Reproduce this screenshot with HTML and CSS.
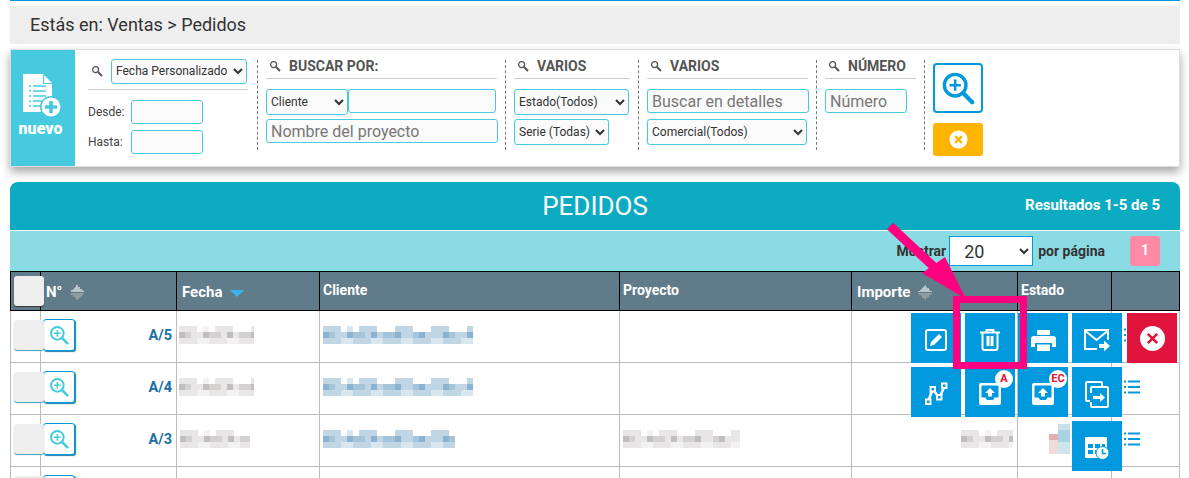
FILE: index.html
```html
<!DOCTYPE html>
<html lang="es">
<head>
<meta charset="utf-8">
<title>Pedidos</title>
<link rel="stylesheet" href="styles.css">
</head>
<body>
<svg class="defs" width="0" height="0">
  <defs>
    <symbol id="lens" viewBox="0 0 12 12"><circle cx="4.600" cy="4.600" r="3" fill="none" stroke="currentColor" stroke-width="1.300"/><path d="M7 7l4 4" stroke="currentColor" stroke-width="2"/></symbol>
    <symbol id="zoomplus" viewBox="0 0 24 24"><circle cx="10" cy="10" r="7.600" fill="none" stroke="currentColor" stroke-width="2.400"/><path d="M15.600 15.600L22 22" stroke="currentColor" stroke-width="3" stroke-linecap="round"/><path d="M10 6v8M6 10h8" stroke="currentColor" stroke-width="1.800"/></symbol>
    <symbol id="list" viewBox="0 0 16 14"><path d="M4 1.500h12M4 7h12M4 12.500h12" stroke="currentColor" stroke-width="2"/><path d="M0 1.500h2M0 7h2M0 12.500h2" stroke="currentColor" stroke-width="2"/></symbol>
    <symbol id="tray" viewBox="0 0 24 24"><rect x="1" y="1" width="22" height="22" rx="2" fill="#fff"/><path d="M3.500 3.500h17v12h-4l-1.500 2.500h-6l-1.500-2.500h-4z" fill="#0099dd"/><path d="M12 6l5 5h-3v3.500h-4V11H7z" fill="#fff"/></symbol>
  </defs>
</svg>
<div class="page">
  <div class="crumb">Estás en: Ventas &gt; Pedidos</div>

  <section class="filters">
    <div class="new">
      <svg class="new-icon" viewBox="0 0 40 44" width="40" height="44">
        <path d="M0 0h20l9 9v29H0z" fill="#fff"/>
        <path d="M20.500 1v8.500H29" fill="none" stroke="#46cadf" stroke-width="1.200"/>
        <path d="M10 12h13M10 17h13M10 22h13M10 27h13M10 32h8M6 12h2M6 17h2M6 22h2M6 27h2M6 32h2" stroke="#46cadf" stroke-width="1.500"/>
        <circle cx="28" cy="33" r="11" fill="#46cadf"/>
        <circle cx="28" cy="33" r="9.500" fill="#fff"/>
        <path d="M28 27v12M22 33h12" stroke="#46cadf" stroke-width="3.600"/>
      </svg>
      <span>nuevo</span>
    </div>
    <div class="groups">
      <div class="group group-date">
        <div class="date-head">
          <svg class="lens"><use href="#lens"/></svg>
          <select class="sel sel-date"><option>Fecha Personalizado</option></select>
        </div>
        <label class="date-row"><span class="date-label">Desde:</span><input class="inp inp-date" type="text"></label>
        <label class="date-row"><span class="date-label">Hasta:</span><input class="inp inp-date" type="text"></label>
      </div>
      <div class="group group-search">
        <div class="g-title"><svg class="lens"><use href="#lens"/></svg>BUSCAR POR:</div>
        <div class="line-pair">
          <select class="sel sel-client"><option>Cliente</option></select>
          <input class="inp inp-client" type="text">
        </div>
        <input class="inp inp-project" type="text" placeholder="Nombre del proyecto">
      </div>
      <div class="group group-var1">
        <div class="g-title"><svg class="lens"><use href="#lens"/></svg>VARIOS</div>
        <select class="sel sel-state"><option>Estado(Todos)</option></select>
        <select class="sel sel-serie"><option>Serie (Todas)</option></select>
      </div>
      <div class="group group-var2">
        <div class="g-title"><svg class="lens"><use href="#lens"/></svg>VARIOS</div>
        <input class="inp inp-detail" type="text" placeholder="Buscar en detalles">
        <select class="sel sel-sales"><option>Comercial(Todos)</option></select>
      </div>
      <div class="group group-num">
        <div class="g-title"><svg class="lens"><use href="#lens"/></svg>NÚMERO</div>
        <input class="inp inp-num" type="text" placeholder="Número">
      </div>
      <div class="group group-btns">
        <button class="btn-search" type="button"><svg width="34" height="34"><use href="#zoomplus"/></svg></button>
        <button class="btn-clear" type="button">
          <svg viewBox="0 0 20 20" width="19" height="19"><circle cx="10" cy="10" r="9.500" fill="#fff"/><path d="M6.500 6.500l7 7M13.500 6.500l-7 7" stroke="#ffb400" stroke-width="2.400"/></svg>
        </button>
      </div>
    </div>
  </section>

  <section class="results">
    <header class="res-head">
      <h1>PEDIDOS</h1>
      <span class="res-count">Resultados 1-5 de 5</span>
    </header>
    <div class="res-bar">
      <span>Mostrar</span>
      <select class="per-page"><option>20</option></select>
      <span>por página</span>
      <span class="page-no">1</span>
    </div>
    <table class="grid">
      <colgroup>
        <col class="c1"><col class="c2"><col class="c3"><col class="c4"><col class="c5"><col class="c6"><col class="c7"><col class="c8">
      </colgroup>
      <thead>
        <tr>
          <th><span class="chk chk-head"></span></th>
          <th class="th-low">N° <span class="sort"></span></th>
          <th class="th-low">Fecha <span class="sort-down"></span></th>
          <th class="th-top">Cliente</th>
          <th class="th-top">Proyecto</th>
          <th class="th-low">Importe <span class="sort"></span></th>
          <th class="th-top">Estado</th>
          <th></th>
        </tr>
      </thead>
      <tbody>
        <tr>
          <td><span class="chk"></span></td>
          <td><div class="num"><span class="view"><svg width="20" height="20"><use href="#zoomplus"/></svg></span><b>A/5</b></div></td>
          <td><div class="mosaic m-grey m-date"></div></td>
          <td><div class="mosaic m-blue m-client"></div></td>
          <td></td><td></td><td></td>
          <td><svg class="list"><use href="#list"/></svg></td>
        </tr>
        <tr>
          <td><span class="chk"></span></td>
          <td><div class="num"><span class="view"><svg width="20" height="20"><use href="#zoomplus"/></svg></span><b>A/4</b></div></td>
          <td><div class="mosaic m-grey m-date"></div></td>
          <td><div class="mosaic m-blue m-client"></div></td>
          <td></td><td></td><td></td>
          <td><svg class="list"><use href="#list"/></svg></td>
        </tr>
        <tr>
          <td><span class="chk"></span></td>
          <td><div class="num"><span class="view"><svg width="20" height="20"><use href="#zoomplus"/></svg></span><b>A/3</b></div></td>
          <td><div class="mosaic m-grey m-date2"></div></td>
          <td><div class="mosaic m-blue m-client2"></div></td>
          <td><div class="mosaic m-grey m-project"></div></td>
          <td><div class="mosaic m-grey m-amount"></div></td>
          <td><div class="m-state"></div></td>
          <td><svg class="list"><use href="#list"/></svg></td>
        </tr>
        <tr>
          <td><span class="chk"></span></td>
          <td><div class="num"><span class="view"></span></div></td>
          <td></td><td></td><td></td><td></td><td></td><td></td>
        </tr>
      </tbody>
    </table>
  </section>

  <div class="actions">
    <a class="tile"><svg viewBox="0 0 22 22" width="22" height="22"><rect x="1" y="1" width="20" height="20" rx="2" fill="none" stroke="#fff" stroke-width="2"/><path d="M5 17l1-4 8-8 3 3-8 8z" fill="#fff"/></svg></a>
    <a class="tile"><svg viewBox="0 0 20 22" width="20" height="22"><path d="M0 3.500h20M6.500 3V1h7v2" fill="none" stroke="#fff" stroke-width="2"/><path d="M2.500 4v15a2 2 0 0 0 2 2h11a2 2 0 0 0 2-2V4" fill="none" stroke="#fff" stroke-width="2"/><path d="M6.500 7h3v10h-3zM10.500 7h3v10h-3z" fill="#fff"/></svg></a>
    <a class="tile"><svg viewBox="0 0 25 21" width="25" height="21"><path d="M6 0h13v5H6zM3 6h19a3 3 0 0 1 3 3v8h-4v-4H4v4H0V9a3 3 0 0 1 3-3zM6 14.500h13V21H6z" fill="#fff"/></svg></a>
    <a class="tile"><svg viewBox="0 0 26 24" width="26" height="24"><path d="M1 13V2h23v10M1 13v8h12" fill="none" stroke="#fff" stroke-width="2"/><path d="M1.500 3l11 9 11-9" fill="none" stroke="#fff" stroke-width="2"/><path d="M15 16h5v-3.500l6 5.500-6 5.500V20h-5z" fill="#fff"/></svg></a>
    <a class="tile tile-red"><svg viewBox="0 0 24 24" width="25" height="25"><circle cx="12" cy="12" r="12" fill="#fff"/><path d="M7.500 7.500l9 9M16.500 7.500l-9 9" stroke="#e0143c" stroke-width="2.500"/></svg></a>

    <a class="tile"><svg viewBox="0 0 24 24" width="25" height="24" fill="none" stroke="#fff" stroke-width="2.600"><path d="M4 19l4-12 7 9 5-12"/><rect x="1.500" y="17.500" width="4.500" height="4.500" fill="#0099dd" stroke-width="2"/><rect x="6" y="5" width="4.500" height="4.500" fill="#0099dd" stroke-width="2"/><rect x="12.500" y="13" width="4.500" height="4.500" fill="#0099dd" stroke-width="2"/><rect x="17.500" y="1.500" width="4.500" height="4.500" fill="#0099dd" stroke-width="2"/></svg></a>
    <a class="tile"><svg width="24" height="24"><use href="#tray"/></svg><em class="badge">A</em></a>
    <a class="tile"><svg width="24" height="24"><use href="#tray"/></svg><em class="badge badge-ec">EC</em></a>
    <a class="tile"><svg viewBox="0 0 24 27" width="24" height="27" fill="none" stroke="#fff" stroke-width="2"><path d="M5 20H2a1 1 0 0 1-1-1V2a1 1 0 0 1 1-1h14a1 1 0 0 1 1 1v3"/><path d="M6 12V7a1 1 0 0 1 1-1h15a1 1 0 0 1 1 1v18a1 1 0 0 1-1 1H7a1 1 0 0 1-1-1v-4"/><path d="M8 15h7v-3l5 4.500-5 4.500v-3H8z" fill="#fff" stroke="none"/></svg></a>
    <a class="tile tile-r3"><svg viewBox="0 0 26 24" width="26" height="24"><path d="M2 1h20a1 1 0 0 1 1 1v11h-8v9H2a1 1 0 0 1-1-1V2a1 1 0 0 1 1-1z" fill="#fff"/><path d="M4 8h5v4H4zM11 8h5v4h-5zM18 8h3v4h-3zM4 14h5v4H4zM11 14h3v4h-3z" fill="#0099dd"/><circle cx="18.500" cy="17" r="6.500" fill="#fff" stroke="#0099dd" stroke-width="1"/><path d="M18.500 13v4.500H22" fill="none" stroke="#0099dd" stroke-width="1.600"/></svg></a>
  </div>

  <svg class="arrow" viewBox="0 0 100 90" width="100" height="90">
    <path d="M5 5L62 58" stroke="#ff0080" stroke-width="9" fill="none"/>
    <path d="M37 52L60 36 81 78z" fill="#ff0080"/>
  </svg>
  <div class="highlight"></div>
</div>
</body>
</html>
```
FILE: styles.css
```css
* { box-sizing: border-box; }
html, body { margin: 0; height: 478px; overflow: hidden; background: #fff; }
body { font-family: Roboto, "Liberation Sans", sans-serif; color: #333; }
.defs { position: absolute; }
.page { position: relative; width: 1189px; height: 478px; padding: 0 9px 0 10px; overflow: hidden; }
.page::before { content: ""; display: block; height: 1px; background: #0099dd; }

.crumb { margin-top: 5px; height: 38px; background: #eee; padding-left: 20px; font-size: 18px; line-height: 38px; color: #333; }

.filters { margin-top: 5px; height: 118px; display: flex; background: #fff; border: 1px solid #ddd; box-shadow: 0 5px 9px rgba(0,0,0,.35); }
.new { width: 64px; background: #46cadf; color: #fff; display: flex; flex-direction: column; align-items: center; padding-top: 24px; font-weight: 900; font-size: 16px; }
.new span { margin-top: 1px; margin-right: 5px; }
.groups { display: flex; padding: 10px 0 0 4px; align-items: flex-start; }
.group { height: 90px; padding: 0 8px 0 8px; border-right: 1px dashed #777; }
.group-date { width: 179px; padding-left: 9px; padding-right: 9px; }
.group-search { width: 248px; }
.group-var1 { width: 133px; }
.group-var2 { width: 178px; }
.group-num { width: 108px; }
.group-btns { border: 0; height: 100px; margin-top: 3px; display: flex; flex-direction: column; gap: 10px; }
.lens { width: 12px; height: 12px; color: #555; flex: none; }
.date-head { display: flex; align-items: center; gap: 8px; height: 32px; margin-top: -2px; padding-left: 3px; padding-bottom: 5px; border-bottom: 1px solid #ccc; margin-bottom: 10px; }
.date-row { display: flex; align-items: center; font-size: 12px; color: #444; height: 24px; margin-bottom: 6px; }
.date-label { width: 43px; }
.g-title { display: flex; align-items: center; gap: 8px; height: 22px; margin-top: -3px; padding-bottom: 4px; padding-left: 3px; font-weight: 700; font-size: 14px; color: #555; border-bottom: 1px solid #ccc; margin-bottom: 10px; }

.sel, .inp { font-family: Roboto, "Liberation Sans", sans-serif; border: 1px solid #46cadf; border-radius: 3px; background: #fafafa; color: #333; outline: 0; display: block; }
.sel { font-size: 12px; height: 26px; }
.inp { font-size: 16px; height: 24px; padding: 0 4px; }
.inp::placeholder { color: #777; opacity: 1; }
.sel-date { width: 136px; height: 25px; }
.inp-date { width: 72px; height: 24px; }
.line-pair { display: flex; margin-bottom: 4px; align-items: flex-start; }
.sel-client { width: 82px; }
.inp-client { width: 148px; }
.inp-project { width: 232px; }
.sel-state { width: 115px; margin-bottom: 4px; }
.sel-serie { width: 95px; }
.inp-detail { width: 162px; margin-bottom: 6px; }
.sel-sales { width: 160px; }
.inp-num { width: 82px; }
.btn-search { width: 50px; height: 50px; padding: 0; background: #fff; border: 2px solid #0099dd; border-radius: 4px; color: #0099dd; display: flex; align-items: center; justify-content: center; }
.btn-clear { width: 50px; height: 33px; padding: 0; background: #ffb400; border: 0; border-radius: 3px; display: flex; align-items: center; justify-content: center; }

.results { margin-top: 15px; }
.res-head { height: 48px; background: #0cabc2; border-radius: 8px 8px 0 0; color: #fff; position: relative; display: flex; align-items: center; justify-content: center; }
.res-head h1 { margin: 0; font-size: 26px; font-weight: 400; }
.res-count { position: absolute; right: 20px; top: 14px; font-size: 15px; font-weight: 700; }
.res-bar { margin-top: 1px; height: 40px; background: #8bdbe5; display: flex; align-items: center; justify-content: flex-end; padding-right: 20px; font-size: 14px; font-weight: 700; color: #333; }
.per-page { width: 84px; height: 30px; margin: 0 5px 0 3px; font-family: Roboto, sans-serif; font-size: 18px; padding-left: 10px; background: #fff; border: 1px solid #0099dd; color: #333; }
.page-no { width: 30px; height: 30px; margin-left: 25px; background: #ff8aa8; border-radius: 3px; color: #fff; text-align: center; line-height: 28px; }

.grid { width: 1169px; table-layout: fixed; border-collapse: collapse; }
.c1 { width: 30px; } .c2 { width: 136px; } .c3 { width: 143px; } .c4 { width: 300px; }
.c5 { width: 232px; } .c6 { width: 166px; } .c7 { width: 94px; } .c8 { width: 68px; }
.grid th { height: 39px; background: #607b8a; border: 1px solid #000; color: #fff; font-size: 14px; font-weight: 700; text-align: left; padding: 0 0 0 5px; white-space: nowrap; }
.grid th:first-child { padding-left: 3px; }
.grid th.th-top { padding-left: 3px; padding-bottom: 3px; }
.grid th.th-low { padding-top: 2px; font-size: 15px; }
.grid td { height: 52px; border: 1px solid #bbb; border-top: 0; padding: 0 0 3px; vertical-align: middle; }
.grid td:first-child { padding-left: 3px; overflow: visible; }
.chk { display: block; width: 30px; height: 30px; background: #eee; border-radius: 3px; box-shadow: 0 1px 1px #3a9fc0; position: relative; }
.chk-head { box-shadow: 0 1px 1px #333; }
.sort { display: inline-block; width: 14px; height: 15px; vertical-align: -3px; margin-left: 4px; background: linear-gradient(to bottom right, transparent 50%, #b9c4ca 50%) 0 0/7px 7px no-repeat, linear-gradient(to bottom left, transparent 50%, #b9c4ca 50%) 7px 0/7px 7px no-repeat, linear-gradient(to top right, transparent 50%, #8f9ca3 50%) 0 8px/7px 7px no-repeat, linear-gradient(to top left, transparent 50%, #8f9ca3 50%) 7px 8px/7px 7px no-repeat; }
.sort-down { display: inline-block; width: 0; height: 0; margin-left: 4px; border: 7px solid transparent; border-top-color: #3db4ec; border-bottom: 0; }
.num { display: flex; align-items: center; justify-content: space-between; padding: 0 4px 0 2px; }
.num b { font-size: 14.500px; color: #1a6fa3; }
.view { width: 32px; height: 32px; background: #fff; border: 1px solid #0099dd; border-radius: 3px; box-shadow: 1px 1px 1px #1a7fb0; color: #46cadf; display: flex; align-items: center; justify-content: center; }
.list { display: block; width: 16px; height: 14px; margin-left: 12px; color: #0099dd; }

.mosaic { height: 18px; background-repeat: no-repeat; background-size: 100% 6px; background-position: 0 0, 0 0, 0 6px, 0 6px, 0 6px, 0 12px, 0 12px;
  background-image:
    repeating-linear-gradient(90deg, var(--l) 0 18px, transparent 18px 36px),
    repeating-linear-gradient(90deg, transparent 0 24px, var(--p) 24px 30px, transparent 30px 48px),
    repeating-linear-gradient(90deg, var(--d) 0 6px, transparent 6px 24px),
    repeating-linear-gradient(90deg, var(--m) 0 12px, transparent 12px 30px),
    linear-gradient(var(--l), var(--l)),
    repeating-linear-gradient(90deg, var(--l) 0 18px, var(--p) 18px 30px),
    repeating-linear-gradient(90deg, transparent 0 6px, var(--l) 6px 12px, transparent 12px 24px);
}
.m-grey { --p: #f3f2f2; --l: #e8e6e6; --m: #d4d1d1; --d: #c2bec0; }
.m-blue { --p: #d8e6ef; --l: #c0d6e4; --m: #a5c3d9; --d: #8bb2ce; }
.m-date { width: 75px; margin-left: 2px; }
.m-date2 { width: 70px; margin-left: 3px; }
.m-client { width: 150px; margin-left: 3px; }
.m-client2 { width: 132px; margin-left: 3px; }
.m-project { width: 117px; margin-left: 3px; }
.m-amount { width: 52px; margin-left: 109px; }
.m-state { width: 21px; height: 30px; margin-left: 31px; background: linear-gradient(#fff 0 10px, #e3b0b0 10px 16px, #f0dada 16px) 0 0/9px 100% no-repeat, linear-gradient(#c7e0ea 0 6px, #a9d3e2 6px 18px, #cfe5ee 18px) 9px 0/12px 100% no-repeat; }

.actions { position: absolute; left: 911px; top: 313px; display: grid; grid-template-columns: 54px 53px 54px 55px 50px; grid-auto-rows: 50px; row-gap: 4px; }
.tile { position: relative; width: 50px; height: 50px; background: #0099dd; display: flex; align-items: center; justify-content: center; padding-top: 4px; }
.tile-red { background: #e0143c; padding-top: 0; }
.tile-r3 { grid-column: 4; }
.badge { position: absolute; top: 3px; right: 2px; width: 18px; height: 18px; border-radius: 50%; background: #fff; color: #e0142a; font-style: normal; font-weight: 700; font-size: 11px; line-height: 18px; text-align: center; }
.badge-ec { right: 1px; }

.arrow { position: absolute; left: 885px; top: 221px; }
.highlight { position: absolute; left: 953px; top: 296px; width: 74px; height: 73px; border: 7px solid #ff0080; }
```
